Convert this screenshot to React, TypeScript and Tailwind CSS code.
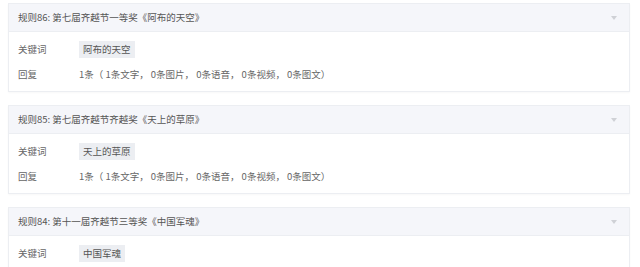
const rules = [
  { id: 86, title: "第七届齐越节一等奖《阿布的天空》", keyword: "阿布的天空" },
  { id: 85, title: "第七届齐越节齐越奖《天上的草原》", keyword: "天上的草原" },
  { id: 84, title: "第十一届齐越节三等奖《中国军魂》", keyword: "中国军魂" },
];

const RuleCard = ({ id, title, keyword }: { id: number; title: string; keyword: string }) => {
  return (
    <div className="border border-[#eceef2] bg-white shadow-[0_1px_2px_rgba(0,0,0,0.03)]">
      <div className="h-[28px] px-[9px] flex items-center justify-between bg-[#f5f6fa] border-b border-[#eceef2]">
        <span className="text-[9.5px] text-[#555]">
          规则{id}: {title}
        </span>
        <svg width="6" height="4" viewBox="0 0 6 4" className="mr-[3px]">
          <path d="M0 0 L6 0 L3 4 Z" fill="#cfd1d6" />
        </svg>
      </div>
      <div className="px-[9px] pt-[9px] pb-[10px] text-[9.5px] text-[#666]">
        <div className="flex items-center h-[17px]">
          <span className="w-[61px]">关键词</span>
          <span className="bg-[#eceef2] px-[4px] h-[17px] leading-[17px] text-[#555]">{keyword}</span>
        </div>
        <div className="flex items-center h-[14px] mt-[9px]">
          <span className="w-[61px]">回复</span>
          <span>1条（ 1条文字， 0条图片， 0条语音， 0条视频， 0条图文）</span>
        </div>
      </div>
    </div>
  );
};

export default function App() {
  return (
    <div
      className="w-[640px] h-[267px] overflow-hidden bg-white pl-2 pr-[10px] pt-[3px] flex flex-col gap-[13px]"
      style={{ fontFamily: '"Noto Sans CJK SC", "Noto Sans", sans-serif' }}
    >
      {rules.map((r) => (
        <RuleCard key={r.id} {...r} />
      ))}
    </div>
  );
}
